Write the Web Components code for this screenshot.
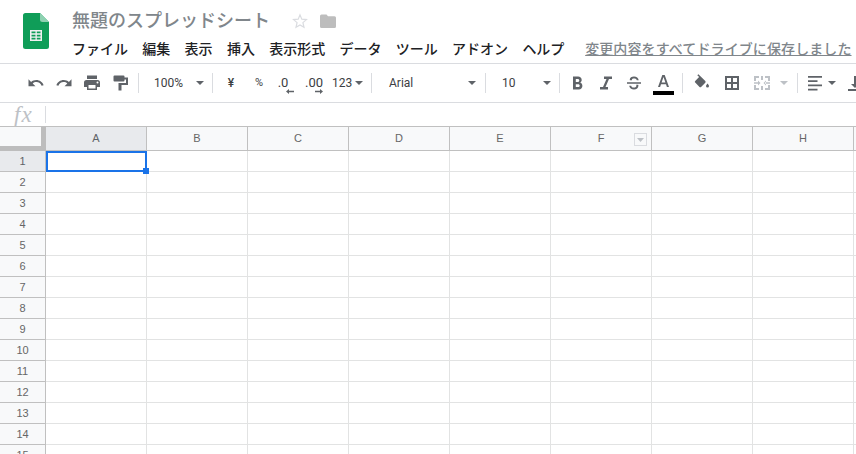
<!DOCTYPE html>
<html>
<head>
<meta charset="utf-8">
<title>無題のスプレッドシート</title>
<style>
  html, body { margin: 0; height: 100%; overflow: hidden; background: #fff; }
  body { display: flex; flex-direction: column; font-family: Roboto, "Noto Sans CJK JP", sans-serif; }
</style>
</head>
<body>
<sheet-header></sheet-header>
<sheet-toolbar></sheet-toolbar>
<formula-bar></formula-bar>
<sheet-grid></sheet-grid>

<script>
const JP = `Roboto, "Noto Sans CJK JP", sans-serif`;

class SheetHeader extends HTMLElement {
  constructor() {
    super();
    this.attachShadow({ mode: "open" });
    const menus = ["ファイル", "編集", "表示", "挿入", "表示形式", "データ", "ツール", "アドオン", "ヘルプ"];
    this.shadowRoot.innerHTML = `
      <style>
        :host { display: flex; height: 63px; border-bottom: 1px solid #dadce0; flex: none; overflow: hidden; box-sizing: content-box; }
        .logo { width: 26px; height: 36px; margin: 13px 23px 0 23px; flex: none; }
        .main { display: flex; flex-direction: column; white-space: nowrap; min-width: 0; }
        .title { display: flex; align-items: center; height: 26px; margin-top: 8px; color: #80868b; font: 500 18px/26px ${JP}; }
        .star { margin-left: 22px; }
        .folder { margin-left: 12px; }
        .menu { display: flex; height: 20px; margin-top: 5px; font: 500 14px/20px ${JP}; color: #202124; gap: 14.300px; }
        .saved { margin-left: 6.500px; color: #80868b; text-decoration: underline; letter-spacing: .1px; }
      </style>
      <svg class="logo" viewBox="0 0 26 36">
        <path d="M2.500 0H17l9 9v24.500a2.500 2.500 0 0 1-2.500 2.500h-21A2.500 2.500 0 0 1 0 33.500v-31A2.500 2.500 0 0 1 2.500 0z" fill="#0f9d58"/>
        <path d="M17 0l9 9h-6.500A2.500 2.500 0 0 1 17 6.500z" fill="#8ed1b1"/>
        <path d="M7 17h12v11H7z M8.500 18.500v1.800h4v-1.800z M13.800 18.500v1.800h3.700v-1.800z M8.500 21.700v1.800h4v-1.800z M13.800 21.700v1.800h3.700v-1.800z M8.500 24.800v1.800h4v-1.800z M13.800 24.800v1.800h3.700v-1.800z" fill="#f1f1f1" fill-rule="evenodd"/>
      </svg>
      <div class="main">
        <div class="title"><span>無題のスプレッドシート</span>
          <svg class="star" width="16" height="16" viewBox="0 0 24 24"><path d="M12 2.800l2.700 6.500 7 .6-5.300 4.600 1.600 6.900-6-3.600-6 3.600 1.600-6.900L2.300 9.900l7-.6z" fill="none" stroke="#dadce0" stroke-width="1.800"/></svg>
          <svg class="folder" width="16" height="14" viewBox="0 0 16 14"><path d="M1.500 0.500h5L8 2.300h6.500A1.500 1.500 0 0 1 16 3.800v8.700a1.500 1.500 0 0 1-1.500 1.500h-13A1.500 1.500 0 0 1 0 12.500V2a1.500 1.500 0 0 1 1.500-1.500z" fill="#bdbdbd"/></svg>
        </div>
        <div class="menu">${menus.map(m => `<span>${m}</span>`).join("")}<span class="saved">変更内容をすべてドライブに保存しました</span></div>
      </div>`;
  }
}

class ToolButton extends HTMLElement {
  constructor() {
    super();
    this.attachShadow({ mode: "open" });
    this.shadowRoot.innerHTML = `
      <style>
        :host { display: flex; align-items: center; justify-content: center; flex: none; color: #5f6368; font: 12px/16px Roboto, sans-serif; white-space: nowrap; position: relative; }
      </style>
      <slot></slot>`;
  }
  connectedCallback() {
    if (this.hasAttribute("w")) this.style.width = this.getAttribute("w") + "px";
  }
}

const caret = (c = "#5f6368") => `<svg width="8" height="4" viewBox="0 0 8 4" style="display:block;flex:none"><path d="M0 0h8L4 4z" fill="${c}"/></svg>`;
const sep = `<i class="sep"></i>`;
const icon = (w, d) => `<tool-button w="${w}"><svg width="18" height="18" viewBox="0 0 18 18" style="display:block"><path d="${d}" fill="#5f6368"/></svg></tool-button>`;
const arrow = (l, d) => `<svg width="8" height="5" viewBox="0 0 8 5" style="left:${l}px;top:14px"><path d="${d}" fill="#5f6368"/></svg>`;

class SheetToolbar extends HTMLElement {
  constructor() {
    super();
    this.attachShadow({ mode: "open" });
    this.shadowRoot.innerHTML = `
      <style>
        :host { display: flex; height: 38px; flex: none; border-bottom: 1px solid #dadce0; padding-left: 22px; overflow: hidden; align-items: stretch; color: #5f6368; }
        .sep { display: block; flex: none; align-self: center; width: 1px; height: 20px; background: #dadce0; margin: 0 -1px 0 0; }
        .ink { color: #3c4043; }
        .dec { font-size: 13px; position: relative; }
        .dec svg { position: absolute; }
        .lab { position: absolute; left: var(--l); }
        .car { position: absolute; left: var(--c); top: 17px; }
      </style>
      ${icon(28, "M9.300 6c-2 0-3.800.7-5.200 1.900L1.500 5.300v7h7L5.700 9.500c1-.9 2.300-1.400 3.700-1.400 2.400 0 4.500 1.600 5.200 3.700l2-.6C15.600 8.200 12.700 6 9.300 6z")}
      ${icon(28, "M8.700 6c2 0 3.800.7 5.200 1.900l2.600-2.600v7h-7l2.800-2.800c-1-.9-2.300-1.400-3.700-1.400-2.400 0-4.500 1.600-5.200 3.700l-2-.6C2.400 8.200 5.300 6 8.700 6z")}
      ${icon(28, "M14.500 6h-11A2.500 2.500 0 0 0 1 8.500V13h3v3h10v-3h3V8.500A2.500 2.500 0 0 0 14.500 6zM12.500 14.500h-7V11h7zM14.500 9.500a1 1 0 1 1 0-2 1 1 0 0 1 0 2zM14 1.500H4V5h10z")}
      ${icon(28, "M13.500 3.500V2.500a1 1 0 0 0-1-1H3.500a1 1 0 0 0-1 1v4a1 1 0 0 0 1 1h9a1 1 0 0 0 1-1V5.500h1.500v3.500H7.500v7.500h3v-5.500h6.500V3.500z")}
      <tool-button w="4"></tool-button>
      ${sep}
      <tool-button w="74"><span class="lab ink" style="--l:16px">100%</span><span class="car" style="--c:58px">${caret()}</span></tool-button>
      ${sep}
      <tool-button w="38"><span class="ink" style="font-weight:500">¥</span></tool-button>
      <tool-button w="18"><span class="ink" style="font-size:11px">%</span></tool-button>
      <tool-button w="30"><span class="ink dec">.0${arrow(8, "M3 0v1.800h5v1.400H3V5L0 2.500z")}</span></tool-button>
      <tool-button w="32"><span class="ink dec">.00${arrow(10, "M5 0v1.800H0v1.400h5V5l3-2.500z")}</span></tool-button>
      <tool-button w="41"><span class="lab ink" style="--l:2px">123</span><span class="car" style="--c:25px">${caret()}</span></tool-button>
      ${sep}
      <tool-button w="114"><span class="lab ink" style="--l:18px">Arial</span><span class="car" style="--c:97px">${caret()}</span></tool-button>
      ${sep}
      <tool-button w="74"><span class="lab ink" style="--l:17px">10</span><span class="car" style="--c:58px">${caret()}</span></tool-button>
      ${sep}
      ${icon(37, "M11.200 8.600C12.100 8 12.700 7 12.700 6c0-2-1.600-3.500-3.600-3.500H4V15.500h5.900c1.900 0 3.500-1.600 3.500-3.500 0-1.500-.9-2.800-2.200-3.400zM6.800 5h2c.8 0 1.500.7 1.500 1.500S9.600 8 8.800 8h-2zM9.300 13H6.800v-2.700h2.500c.8 0 1.400.6 1.400 1.350S10.100 13 9.300 13z")}
      ${icon(20, "M7 2.500V5h2.500L6 13H3v2.500h8V13H8.500L12 5h3V2.500z")}
      ${icon(36, "M2 8.200h14v1.600H2zM11.800 6.300C11.700 5 10.500 4.400 9 4.400c-1.200 0-2.100.5-2.100 1.200 0 .2 0 .5.200.7H4.900C4.800 6 4.800 5.800 4.800 5.500c0-1.800 1.900-3 4.200-3 2.500 0 4.500 1.300 4.700 3.800zM11.100 10.800c.2.300.3.600.3 1 0 .9-1 1.800-2.400 1.800-1.500 0-2.700-.7-2.800-1.900h-2c.2 2.400 2.400 3.800 4.800 3.800 2.500 0 4.400-1.400 4.400-3.700 0-.4 0-.7-.2-1z")}
      <tool-button w="22"><svg width="21" height="26" viewBox="0 0 21 26" style="display:block"><path d="M9.300 5h2.400L16 17h-2.100l-.9-2.800H8L7.100 17H5zM8.600 12.400h3.800L10.500 7z" fill="#5f6368"/><rect x="0" y="21" width="21" height="4" fill="#000"/></svg></tool-button>
      <tool-button w="8"></tool-button>
      ${sep}
      ${icon(40, "M12.300 7.100L5.400.2 4.300 1.300l1.800 1.800-3.900 3.900c-.5.500-.5 1.200 0 1.600l4.300 4.300c.2.200.5.300.8.300s.6-.1.800-.3l4.200-4.200c.4-.4.400-1.200-.1-1.600zM14.500 9.500s-1.500 1.600-1.500 2.600a1.500 1.500 0 0 0 3 0c0-1-1.500-2.600-1.500-2.600z")}
      ${icon(20, "M2 2v14h14V2zM8 14H4v-4h4zM8 8H4V4h4zM14 14h-4v-4h4zM14 8h-4V4h4z")}
      <tool-button w="39"><svg width="18" height="18" viewBox="0 0 18 18" style="display:block"><path d="M1 2h5v2H3v3H1zM12 2h5v5h-2V4h-3zM1 11h2v3h3v2H1zM15 11h2v5h-5v-2h3zM8 2h2v4H8zM8 12h2v4H8zM1 8.200h5v1.600H1zM12 8.200h5v1.600h-5zM5 6.500L7.500 9 5 11.500zM13 6.500L10.500 9 13 11.500z" fill="#bdc1c6"/></svg></tool-button>
      <tool-button w="6">${caret("#bdc1c6")}</tool-button>
      <tool-button w="10"></tool-button>
      ${sep}
      <tool-button w="3"></tool-button>
      ${icon(30, "M2 2h14v1.800H2zM2 6.300h9.500v1.800H2zM2 10.500h14v1.800H2zM2 14.700h9.500v1.800H2z")}
      <tool-button w="4">${caret()}</tool-button>
      <tool-button w="12"></tool-button>
      ${icon(18, "M8 2h2v8h3l-4 4-4-4h3zM2 15h14v2H2z")}`;
  }
}

class FormulaBar extends HTMLElement {
  constructor() {
    super();
    this.attachShadow({ mode: "open" });
    this.shadowRoot.innerHTML = `
      <style>
        :host { display: flex; align-items: center; height: 23px; flex: none; }
        .fx { width: 45px; box-sizing: border-box; padding-left: 14px; color: #bdc1c6; font: italic 23px/23px "Liberation Serif", serif; letter-spacing: 1px; height: 23px; }
        .bar { width: 1px; height: 17px; background: #dadce0; }
      </style>
      <span class="fx">fx</span><span class="bar"></span>`;
  }
}

class SheetGrid extends HTMLElement {
  constructor() {
    super();
    this.attachShadow({ mode: "open" });
    const cols = "ABCDEFGH".split("");
    let html = `<div class="corner"></div>`;
    cols.forEach((c, i) => {
      html += `<div class="ch${i === 0 ? " sel" : ""}">${c}${c === "F" ? `<span class="flt"><svg width="7" height="4" viewBox="0 0 7 4"><path d="M0 0h7L3.500 4z" fill="#bdc1c6"/></svg></span>` : ""}</div>`;
    });
    html += `<div class="ch tail"></div>`;
    for (let r = 1; r <= 15; r++) {
      html += `<div class="rh${r === 1 ? " sel" : ""}">${r}</div>`;
      for (let c = 0; c < 9; c++) {
        html += `<div class="cell${r === 1 && c === 0 ? " on" : ""}">${r === 1 && c === 0 ? `<span class="active"></span>` : ""}</div>`;
      }
    }
    this.shadowRoot.innerHTML = `
      <style>
        :host { display: block; flex: 1; min-height: 0; overflow: hidden; border-top: 1px solid #c0c0c0; }
        .grid { display: grid; grid-template-columns: 46px repeat(8, 101px) 101px; grid-template-rows: 24px repeat(15, 21px); font: 11px/1 "Liberation Sans", sans-serif; color: #666; }
        .corner, .ch, .rh { background: #f8f9fa; box-sizing: border-box; display: flex; align-items: center; justify-content: center; }
        .corner { border-right: 5px solid #bdbdbd; border-bottom: 5px solid #bdbdbd; }
        .ch { border-right: 1px solid #c0c0c0; border-bottom: 1px solid #c0c0c0; position: relative; }
        .rh { border-right: 1px solid #c0c0c0; border-bottom: 1px solid #c0c0c0; }
        .sel { background: #e8eaed; color: #5f6368; }
        .cell { box-sizing: border-box; border-right: 1px solid #e2e3e3; border-bottom: 1px solid #e2e3e3; position: relative; }
        .on { z-index: 2; }
        .flt { position: absolute; right: 4px; top: 6px; width: 11px; height: 11px; border: 1px solid #dadce0; display: flex; align-items: center; justify-content: center; }
        .active { position: absolute; left: 0; top: 0; right: -1px; bottom: -1px; border: 2px solid #1a73e8; box-sizing: border-box; }
        .active::after { content: ""; position: absolute; right: -4px; bottom: -4px; width: 6px; height: 6px; background: #1a73e8; }
      </style>
      <div class="grid">${html}</div>`;
  }
}

customElements.define("sheet-header", SheetHeader);
customElements.define("tool-button", ToolButton);
customElements.define("sheet-toolbar", SheetToolbar);
customElements.define("formula-bar", FormulaBar);
customElements.define("sheet-grid", SheetGrid);
</script>
</body>
</html>
